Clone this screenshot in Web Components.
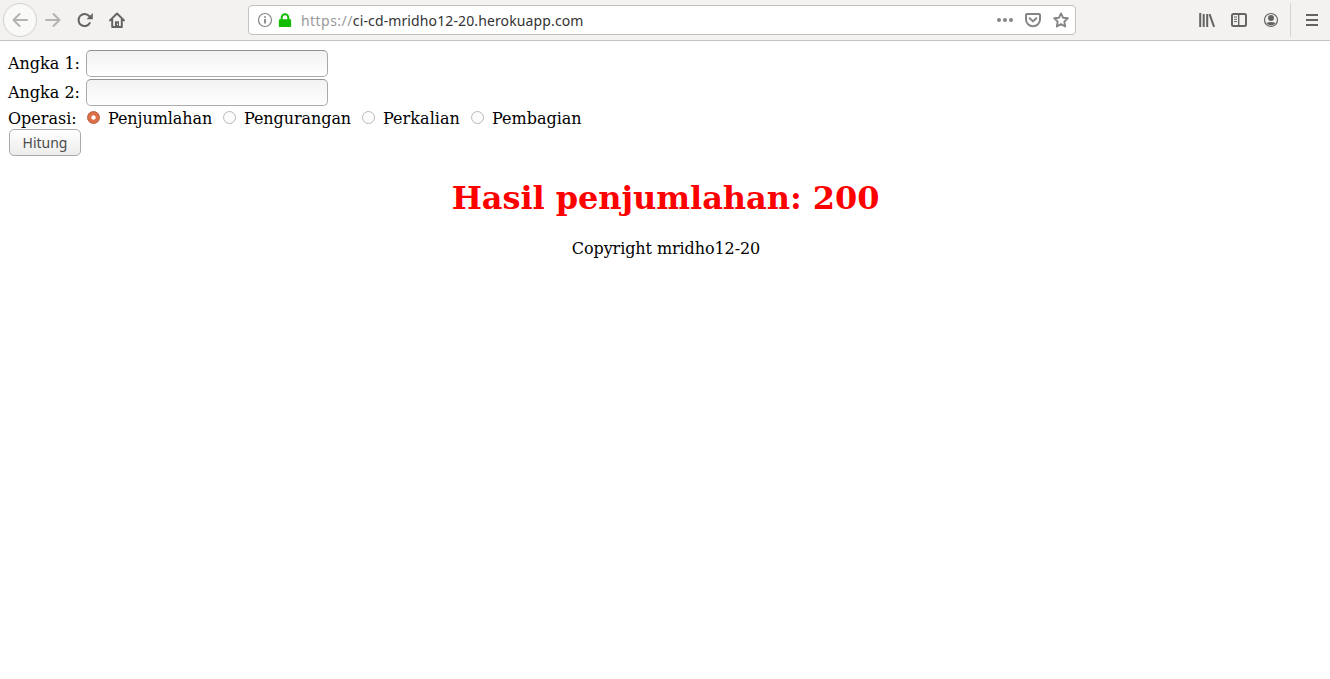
<!DOCTYPE html>
<html lang="id">
<head>
<meta charset="utf-8">
<title>Kalkulator</title>
<style>
html,body{margin:0;height:100%;background:#fff;overflow:hidden}
body{font:16px "DejaVu Serif",serif;color:#000}
</style>
</head>
<body>
<browser-toolbar></browser-toolbar>
<calculator-page></calculator-page>
<script>
const define = (name, html) => customElements.define(name, class extends HTMLElement {
  constructor() {
    super();
    this.attachShadow({mode: 'open'}).innerHTML = html;
  }
});

const icons = {
  back: '<path d="M15 8H2M7.5 2 1.5 8l6 6" stroke-width="2" stroke-linecap="round" stroke-linejoin="round"/>',
  forward: '<path d="M1 8h13M8.5 2l6 6-6 6" stroke-width="2" stroke-linecap="round" stroke-linejoin="round"/>',
  reload: '<path d="M12.8 11A6 6 0 1 1 12.2 4.2" stroke-width="2" stroke-linecap="round"/><path d="M15.8 1v6.3H9.5z" fill="currentColor" stroke="none"/>',
  home: '<path d="M1 8.4 8 1.5l7 6.9M3.2 7v8h9.6V7" stroke-width="2" stroke-linecap="round" stroke-linejoin="round"/><path d="M6 15V9.3h4V15" fill="currentColor" stroke="none"/><path d="M8 11.5h1v1.5h-1z" fill="#f3f2f0" stroke="none"/>',
  info: '<circle cx="8" cy="8" r="6.5" stroke-width="1.2"/><path d="M8 7v4.5M8 4.2v1.6" stroke-width="1.8"/>',
  lock: '<rect x="1" y="7" width="14" height="9" rx="1" fill="currentColor" stroke="none"/><path d="M4.2 8V5.2a3.8 3.8 0 0 1 7.6 0V8" stroke-width="2.3"/>',
  more: '<g fill="currentColor" stroke="none"><circle cx="2" cy="8" r="2"/><circle cx="8" cy="8" r="2"/><circle cx="14" cy="8" r="2"/></g>',
  pocket: '<path d="M2 2h12q1 0 1 1v4.5a7 6.7 0 0 1-14 0V3q0-1 1-1z" stroke-width="2"/><path d="m4.7 6.2 3.3 3.2 3.3-3.2" stroke-width="2" stroke-linecap="round" stroke-linejoin="round"/>',
  star: '<path d="m8 1.4 2 4.3 4.8.6-3.5 3.3.9 4.9L8 12.1l-4.2 2.4.9-4.9L1.2 6.3 6 5.7z" stroke-width="1.9" stroke-linejoin="round"/>',
  library: '<path d="M1.2 1v14M4.7 2v13M8.2 2v13M10.5 2.2l4.6 12.6" stroke-width="2"/>',
  sidebar: '<rect x="1" y="2" width="14" height="12" rx="1.5" stroke-width="2"/><path d="M7.7 2v12" stroke-width="1.4"/><path d="M3 5h3M3 7.3h3M3 9.6h3" stroke-width="1"/>',
  account: '<circle cx="8" cy="8" r="6.5" stroke-width="1.2"/><circle cx="8" cy="6" r="3" fill="currentColor" stroke="none"/><path d="M3.3 11q4.7-2.2 9.4 0Q11.2 13.4 8 13.4T3.3 11z" fill="currentColor" stroke="none"/>',
  menu: '<path d="M2 3h12M2 8h12M2 13h12" stroke-width="2"/>'
};

customElements.define('tool-icon', class extends HTMLElement {
  connectedCallback() {
    this.attachShadow({mode: 'open'}).innerHTML = `
      <style>:host{display:block;width:16px;height:16px;flex:none}svg{display:block;width:100%;height:100%;overflow:visible}</style>
      <svg viewBox="0 0 16 16" fill="none" stroke="currentColor">${icons[this.getAttribute('name')]}</svg>`;
  }
});

define('browser-toolbar', `
  <style>
    :host{display:flex;box-sizing:border-box;height:41px;background:#f3f2f0;border-bottom:1px solid #c4c2c0;color:#646462;align-items:center;position:relative}
    .nav{display:flex;align-items:center;width:248px}
    .back{box-sizing:border-box;width:34px;height:34px;border:1px solid #d2d1cf;border-radius:50%;background:#f9f9f8;display:grid;place-items:center;margin:0 11px 0 3px}
    .off{color:#b4b3b1}
    .nav > tool-icon{margin-right:16px;margin-left:-3px;width:16px}
    .nav > tool-icon + tool-icon{margin-left:0}
    .address{box-sizing:border-box;width:828px;height:30px;border:1px solid #c4c2c0;border-radius:4px;background:#fff;display:flex;align-items:center;color:#858585}
    .info{margin-left:8px}.lock{color:#12bc00;width:14px;height:14px;margin:0 9px 0 5px}
    .url{font:14px/20px "Noto Sans",sans-serif;letter-spacing:.12px;color:#333;white-space:pre;margin-top:1px}
    .url i{font-style:normal;color:#999;letter-spacing:.45px}
    .actions{display:flex;gap:12px;margin:0 6px 0 auto}
    .tools{display:flex;gap:16px;margin-left:123px}
    .menu{margin-left:11px;border-left:1px solid #d5d4d2;height:34px;display:flex;align-items:center;padding-left:13px}
  </style>
  <div class="nav"><span class="back off"><tool-icon name="back"></tool-icon></span><tool-icon class="off" name="forward"></tool-icon><tool-icon name="reload"></tool-icon><tool-icon name="home"></tool-icon></div>
  <div class="address"><tool-icon class="info" name="info"></tool-icon><tool-icon class="lock" name="lock"></tool-icon><span class="url"><i>https://</i>ci-cd-mridho12-20.herokuapp.com</span><div class="actions"><tool-icon name="more"></tool-icon><tool-icon name="pocket"></tool-icon><tool-icon name="star"></tool-icon></div></div>
  <div class="tools"><tool-icon name="library"></tool-icon><tool-icon name="sidebar"></tool-icon><tool-icon name="account"></tool-icon></div>
  <div class="menu"><tool-icon name="menu"></tool-icon></div>`);

define('number-field', `
  <style>
    :host{display:flex;align-items:center;height:29px}
    label{width:78px;white-space:nowrap}
    input{box-sizing:border-box;width:242px;height:27px;margin:0;border:1px solid #aaa;border-top-color:#929292;border-radius:5px;background:linear-gradient(#f2f2f2,#fff);outline:0}
  </style>
  <label><slot></slot></label><input>`);

define('operation-option', `
  <style>
    :host{display:flex;align-items:center;width:var(--w);white-space:nowrap;letter-spacing:var(--ls,0)}
    i{box-sizing:border-box;width:13px;height:13px;border:1px solid #b9b9b9;border-radius:50%;background:#fcfcfc;margin:-2px 8.5px 0 .5px;flex:none}
    :host([checked]) i{border:1px solid #b9583a;background:radial-gradient(circle,#fff 0 1.6px,#dc6f48 2.7px)}
  </style><i></i><slot></slot>`);

define('calculator-page', `
  <style>
    :host{display:block;padding:8px 8px 0}
    .ops{display:flex;height:22px;align-items:center}
    .label{width:78px}
    button{display:block;box-sizing:border-box;width:72px;height:27px;margin:0 0 0 1px;padding:0;border:1px solid #aaa;border-radius:5px;background:linear-gradient(#fff,#ececeb);color:#4c4c4c;font:14px "Noto Sans",sans-serif}
    h1{font-size:32px;line-height:38px;color:red;text-align:center;margin:23px -1px 22px 0;letter-spacing:-.06px}
    p{margin:0 -2px 0 0;text-align:center;line-height:19px;letter-spacing:-.09px}
  </style>
  <number-field>Angka 1:</number-field>
  <number-field>Angka 2:</number-field>
  <div class="ops"><span class="label">Operasi:</span>
    <operation-option checked style="--w:136px;--ls:-.08px">Penjumlahan</operation-option><operation-option style="--w:139px;--ls:-.08px">Pengurangan</operation-option><operation-option style="--w:109px;--ls:.05px">Perkalian</operation-option><operation-option>Pembagian</operation-option></div>
  <button>Hitung</button>
  <h1>Hasil penjumlahan: 200</h1>
  <p>Copyright mridho12-20</p>`);
</script>
</body>
</html>
